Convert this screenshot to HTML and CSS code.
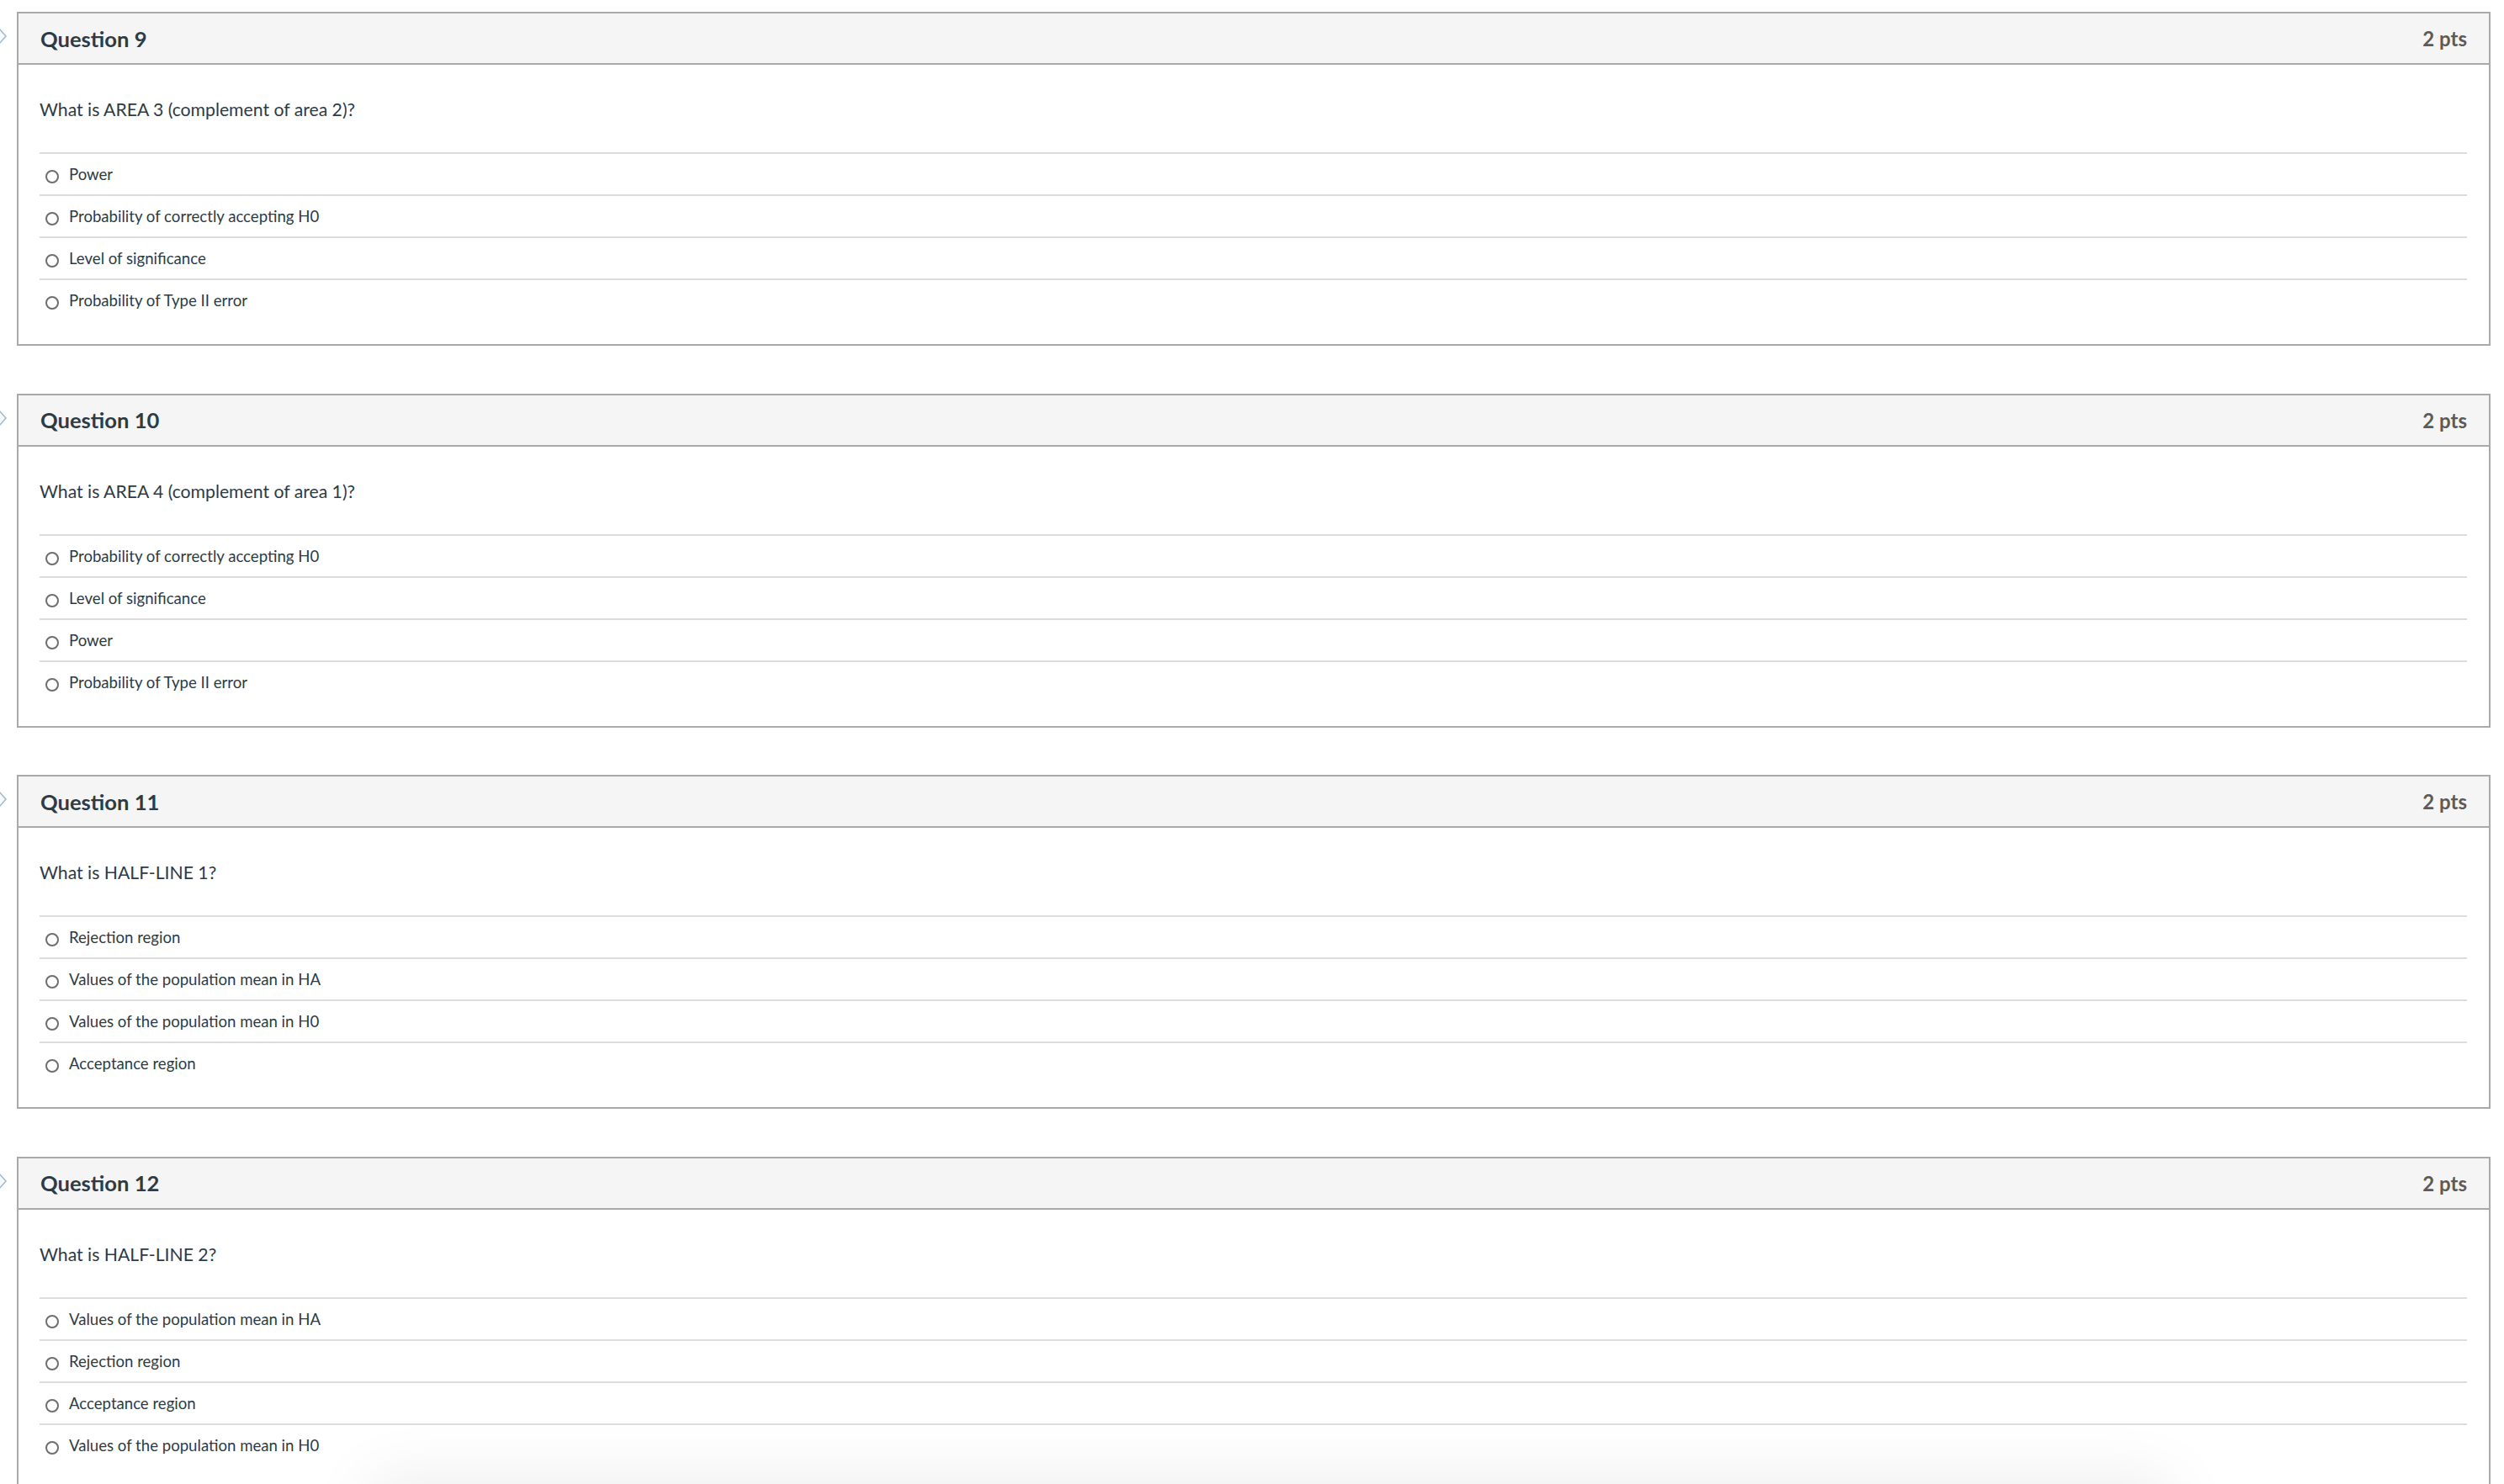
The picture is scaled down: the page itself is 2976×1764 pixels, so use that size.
FILE: index.html
```html
<!DOCTYPE html>
<html lang="en">
<head>
<meta charset="utf-8">
<title>Quiz</title>
<link rel="stylesheet" href="styles.css">
</head>
<body>
<div class="quiz">
  <section class="question">
    <svg class="flag" width="30" height="20" viewBox="0 0 30 20"><path d="M-4 1 H17 L25 10 L17 19 H-4" fill="#f7fafc" stroke="#9fbbd2" stroke-width="1.6"/></svg>
    <header class="q-head"><h2 class="q-title">Question 9</h2><span class="q-pts">2 pts</span></header>
    <div class="q-body">
      <p class="q-text">What is AREA 3 (complement of area 2)?</p>
      <ul class="answers">
        <li class="answer"><span class="radio"></span>Power</li>
        <li class="answer"><span class="radio"></span>Probability of correctly accepting H0</li>
        <li class="answer"><span class="radio"></span>Level of significance</li>
        <li class="answer"><span class="radio"></span>Probability of Type II error</li>
      </ul>
    </div>
  </section>
  <section class="question">
    <svg class="flag" width="30" height="20" viewBox="0 0 30 20"><path d="M-4 1 H17 L25 10 L17 19 H-4" fill="#f7fafc" stroke="#9fbbd2" stroke-width="1.6"/></svg>
    <header class="q-head"><h2 class="q-title">Question 10</h2><span class="q-pts">2 pts</span></header>
    <div class="q-body">
      <p class="q-text">What is AREA 4 (complement of area 1)?</p>
      <ul class="answers">
        <li class="answer"><span class="radio"></span>Probability of correctly accepting H0</li>
        <li class="answer"><span class="radio"></span>Level of significance</li>
        <li class="answer"><span class="radio"></span>Power</li>
        <li class="answer"><span class="radio"></span>Probability of Type II error</li>
      </ul>
    </div>
  </section>
  <section class="question">
    <svg class="flag" width="30" height="20" viewBox="0 0 30 20"><path d="M-4 1 H17 L25 10 L17 19 H-4" fill="#f7fafc" stroke="#9fbbd2" stroke-width="1.6"/></svg>
    <header class="q-head"><h2 class="q-title">Question 11</h2><span class="q-pts">2 pts</span></header>
    <div class="q-body">
      <p class="q-text">What is HALF-LINE 1?</p>
      <ul class="answers">
        <li class="answer"><span class="radio"></span>Rejection region</li>
        <li class="answer"><span class="radio"></span>Values of the population mean in HA</li>
        <li class="answer"><span class="radio"></span>Values of the population mean in H0</li>
        <li class="answer"><span class="radio"></span>Acceptance region</li>
      </ul>
    </div>
  </section>
  <section class="question">
    <svg class="flag" width="30" height="20" viewBox="0 0 30 20"><path d="M-4 1 H17 L25 10 L17 19 H-4" fill="#f7fafc" stroke="#9fbbd2" stroke-width="1.6"/></svg>
    <header class="q-head"><h2 class="q-title">Question 12</h2><span class="q-pts">2 pts</span></header>
    <div class="q-body">
      <p class="q-text">What is HALF-LINE 2?</p>
      <ul class="answers">
        <li class="answer"><span class="radio"></span>Values of the population mean in HA</li>
        <li class="answer"><span class="radio"></span>Rejection region</li>
        <li class="answer"><span class="radio"></span>Acceptance region</li>
        <li class="answer"><span class="radio"></span>Values of the population mean in H0</li>
      </ul>
    </div>
  </section>
</div>
<div class="dock-shadow"></div>
</body>
</html>
```
FILE: styles.css
```css
html, body {
  margin: 0;
  padding: 0;
  background: #ffffff;
  overflow: hidden;
}
body {
  font-family: Lato, "Open Sans", "Liberation Sans", sans-serif;
  color: #2d3b45;
  height: 1764px;
}
.quiz {
  display: flex;
  flex-direction: column;
  gap: 56.6px;
  padding: 14px 16px 0 20px;
}
.question {
  position: relative;
  border: 2px solid #a9a9a9;
  background: #fff;
}
.flag {
  position: absolute;
  left: -40px;
  top: 17px;
}
.q-head {
  display: flex;
  align-items: center;
  justify-content: space-between;
  height: 59px;
  padding: 0 26px 0 26px;
  background: #f5f5f5;
  border-bottom: 2px solid #a9a9a9;
}
.q-title {
  margin: 0;
  font-size: 25.6px;
  font-weight: 700;
  color: #2d3b45;
}
.q-pts {
  font-size: 24px;
  font-weight: 700;
  color: #5b5b5b;
}
.q-body {
  padding: 0 26px 28px 25px;
}
.q-text {
  margin: 0;
  padding: 38px 0 36px;
  font-size: 21.2px;
  line-height: 30px;
}
.answers {
  list-style: none;
  margin: 0;
  padding: 0;
}
.answer {
  display: flex;
  align-items: center;
  gap: 12px;
  height: 48px;
  padding-left: 7px;
  border-top: 2px solid #dcdcdc;
  font-size: 18.6px;
}
.radio {
  box-sizing: border-box;
  width: 16px;
  height: 16px;
  border: 2px solid #6e6e6e;
  border-radius: 50%;
  margin-top: 6px;
}
.dock-shadow {
  position: fixed;
  left: 470px;
  width: 2080px;
  top: 1790px;
  height: 120px;
  box-shadow: 0 0 80px 30px rgba(0, 0, 0, 0.08);
  background: #eee;
}
```
